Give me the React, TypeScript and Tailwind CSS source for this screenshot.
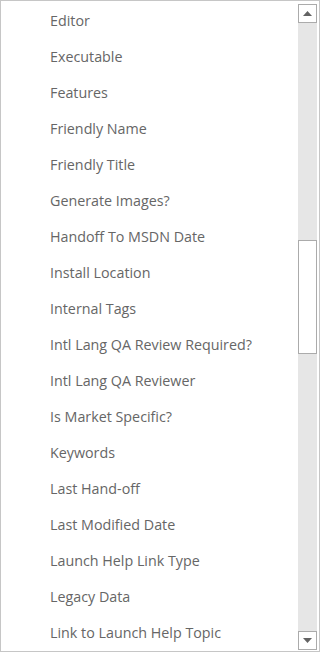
const items = [
  "Editor",
  "Executable",
  "Features",
  "Friendly Name",
  "Friendly Title",
  "Generate Images?",
  "Handoff To MSDN Date",
  "Install Location",
  "Internal Tags",
  "Intl Lang QA Review Required?",
  "Intl Lang QA Reviewer",
  "Is Market Specific?",
  "Keywords",
  "Last Hand-off",
  "Last Modified Date",
  "Launch Help Link Type",
  "Legacy Data",
  "Link to Launch Help Topic",
];

function Arrow({ down }: { down?: boolean }) {
  return (
    <svg width="9" height="5" viewBox="0 0 9 5">
      <polygon points={down ? "0,0 9,0 4.5,5" : "0,5 9,5 4.5,0"} fill="#636363" />
    </svg>
  );
}

export default function App() {
  return (
    <div
      className="w-[320px] h-[652px] bg-white border border-[#c6c6c6] flex overflow-hidden"
      style={{ fontFamily: '"Segoe UI", "Open Sans", sans-serif' }}
    >
      {/* field list */}
      <ul className="flex-1 pt-[2px] overflow-hidden">
        {items.map((label) => (
          <li key={label} className="h-9 flex items-center pl-[49px] text-[14.3px] text-[#666666] whitespace-nowrap">
            {label}
          </li>
        ))}
      </ul>

      {/* scrollbar */}
      <div className="pt-[3px] pb-px pr-[2px] flex">
        <div className="w-[19px] flex flex-col bg-[#e6e6e6]">
          <div className="h-[19px] border border-[#ababab] bg-white flex items-center justify-center">
            <Arrow />
          </div>
          <div className="flex-1 pt-[217px]">
            <div className="h-[114px] border border-[#ababab] bg-white" />
          </div>
          <div className="h-[19px] border border-[#ababab] bg-white flex items-center justify-center">
            <Arrow down />
          </div>
        </div>
      </div>
    </div>
  );
}
